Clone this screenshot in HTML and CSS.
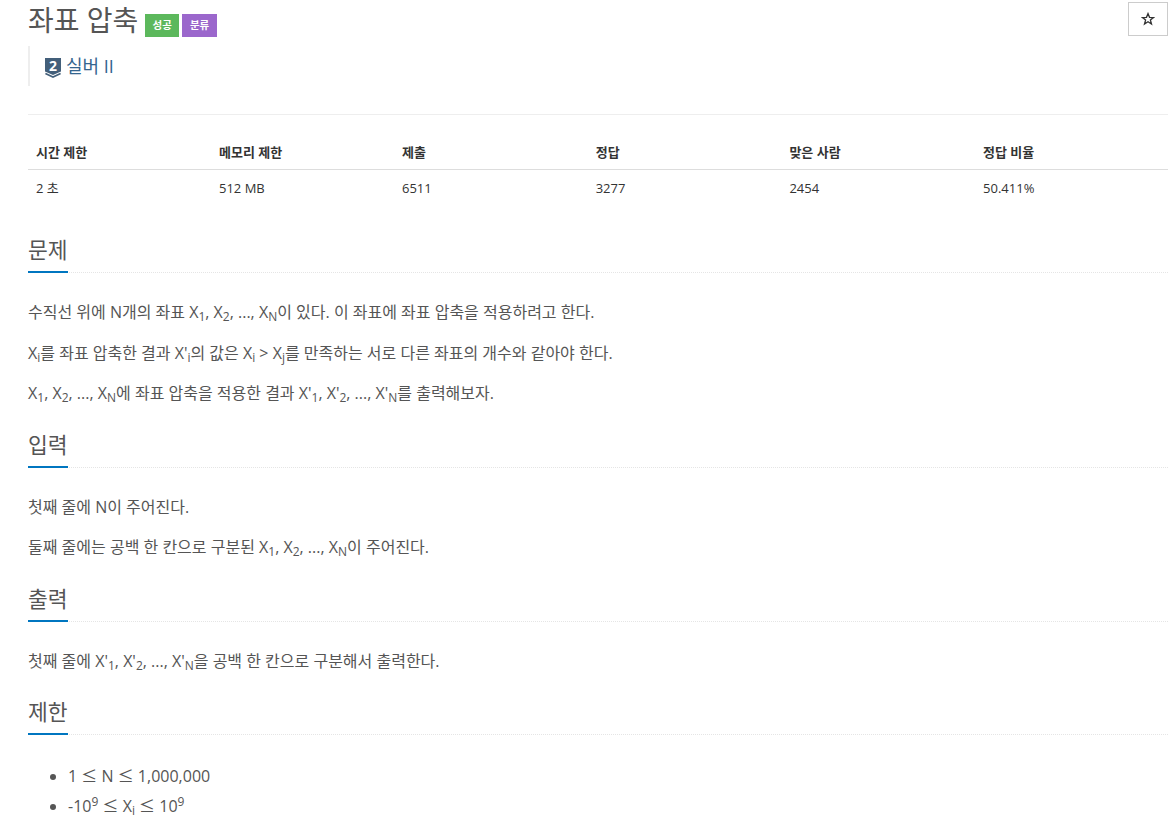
FILE: index.html
```html
<!DOCTYPE html>
<html lang="ko">
<head>
<meta charset="utf-8">
<title>좌표 압축</title>
<link rel="stylesheet" href="styles.css">
</head>
<body>
<div class="page">
  <header class="page-header">
    <div class="title-row">
      <h1 class="title">좌표 압축</h1>
      <span class="label label-green">성공</span>
      <span class="label label-purple">분류</span>
    </div>
    <button class="star-btn" type="button" aria-label="즐겨찾기"><svg viewBox="0 0 14 14" width="14" height="14"><path fill="none" stroke="#333" stroke-width="1.3" d="M7 1.6 8.5 5.3 12.5 5.5 9.4 8 10.5 12 7 9.8 3.5 12 4.6 8 1.5 5.5 5.5 5.3Z"/></svg></button>
  </header>
  <blockquote class="tier">
    <svg class="tier-icon" viewBox="0 0 16 20" width="16" height="20"><path fill="#435f7a" d="M0 0H16V13.5L8 17 0 13.5Z"/><path fill="none" stroke="#435f7a" stroke-width="1.6" d="M0.4 15.6 8 19 15.6 15.6"/><text x="8" y="12.5" text-anchor="middle" class="tier-num">2</text></svg>
    <span class="tier-name">실버 II</span>
  </blockquote>
  <hr class="rule">
  <table class="info">
    <thead>
      <tr><th class="c1">시간 제한</th><th class="c2">메모리 제한</th><th class="c3">제출</th><th class="c4">정답</th><th class="c5">맞은 사람</th><th>정답 비율</th></tr>
    </thead>
    <tbody>
      <tr><td>2 초</td><td>512 MB</td><td>6511</td><td>3277</td><td>2454</td><td>50.411%</td></tr>
    </tbody>
  </table>

  <section class="section first">
    <h2 class="headline"><span>문제</span></h2>
    <div class="body">
      <p>수직선 위에 N개의 좌표 X<sub>1</sub>, X<sub>2</sub>, ..., X<sub>N</sub>이 있다. 이 좌표에 좌표 압축을 적용하려고 한다.</p>
      <p>X<sub>i</sub>를 좌표 압축한 결과 X'<sub>i</sub>의 값은 X<sub>i</sub> &gt; X<sub>j</sub>를 만족하는 서로 다른 좌표의 개수와 같아야 한다.</p>
      <p>X<sub>1</sub>, X<sub>2</sub>, ..., X<sub>N</sub>에 좌표 압축을 적용한 결과 X'<sub>1</sub>, X'<sub>2</sub>, ..., X'<sub>N</sub>를 출력해보자.</p>
    </div>
  </section>

  <section class="section">
    <h2 class="headline"><span>입력</span></h2>
    <div class="body">
      <p>첫째 줄에 N이 주어진다.</p>
      <p>둘째 줄에는 공백 한 칸으로 구분된 X<sub>1</sub>, X<sub>2</sub>, ..., X<sub>N</sub>이 주어진다.</p>
    </div>
  </section>

  <section class="section">
    <h2 class="headline"><span>출력</span></h2>
    <div class="body">
      <p>첫째 줄에 X'<sub>1</sub>, X'<sub>2</sub>, ..., X'<sub>N</sub>을 공백 한 칸으로 구분해서 출력한다.</p>
    </div>
  </section>

  <section class="section">
    <h2 class="headline"><span>제한</span></h2>
    <div class="body">
      <ul>
        <li>1 <span class="le">≤</span> N <span class="le">≤</span> 1,000,000</li>
        <li>-10<sup>9</sup> <span class="le">≤</span> X<sub>i</sub> <span class="le">≤</span> 10<sup>9</sup></li>
      </ul>
    </div>
  </section>
</div>
</body>
</html>
```
FILE: styles.css
```css
* { box-sizing: border-box; }
html, body { margin: 0; padding: 0; height: 828px; overflow: hidden; background: #fff; }
body {
  font-family: "Open Sans", "Noto Sans CJK KR", sans-serif;
  font-size: 16px;
  color: #555;
}
.page { padding-left: 28px; width: 1168px; }
.page-header { display: flex; justify-content: space-between; align-items: flex-start; height: 46px; }
.title-row { display: flex; align-items: flex-start; }
.title { margin: 0; padding-top: 2px; font-size: 28px; line-height: 36px; font-weight: 400; color: #555; }
.label {
  display: block; margin-top: 14px; height: 23px; padding: 0 7.25px; font-size: 10.5px; line-height: 23px;
  font-weight: 700; color: #fff;
}
.label-green { background: #5cb85c; margin-left: 7px; }
.label-purple { background: #9b67cc; margin-left: 3px; padding: 0 7.75px; }
.star-btn {
  display: flex; align-items: center; justify-content: center;
  width: 40px; height: 34px; margin: 2px 0 0; padding: 0; background: #fff; border: 1px solid #ccc;
}
.tier { margin: 0; height: 40px; border-left: 2px solid #eee; padding-left: 15px; display: flex; align-items: center; gap: 5px; }
.tier-icon { display: block; margin-top: 4px; overflow: visible; }
.tier-num { font-family: "Open Sans", sans-serif; font-weight: 700; font-size: 14px; fill: #fff; }
.tier-name { font-size: 18px; color: #34658f; line-height: 24px; }
.rule { margin: 28px 0 0; border: 0; border-top: 1px solid #eee; }
.info { width: 100%; border-collapse: collapse; table-layout: fixed; margin-top: 18px; font-size: 13px; color: #333; }
.info th { text-align: left; font-weight: 700; height: 36px; padding: 2px 8px 0; border-bottom: 1px solid #ddd; color: #333; }
.info td { height: 37px; padding: 0 8px; }
.c1, .c2 { width: 183px; }
.c3, .c4, .c5 { width: 193.7px; }
.section { margin-top: 22.5px; }
.section.first { margin-top: 30px; }
.headline {
  margin: 0; height: 37px; border-bottom: 1px dotted #e5e5e5; font-size: 21.5px; font-weight: 400; line-height: 28px; color: #555;
}
.headline span { display: block; width: 40px; height: 37px; border-bottom: 2px solid #0076c0; white-space: nowrap; }
.body { padding-top: 13.5px; }
.body p { height: 30px; line-height: 30px; margin: 10.5px 0 0; }
sub, sup { font-size: 75%; line-height: 0; position: relative; vertical-align: baseline; }
sub { bottom: -0.25em; }
sup { top: -0.5em; }
ul { margin: 11px 0 0; padding-left: 40px; }
li { height: 30px; line-height: 30px; }
.le { font-family: "Noto Sans CJK KR", sans-serif; }
```
